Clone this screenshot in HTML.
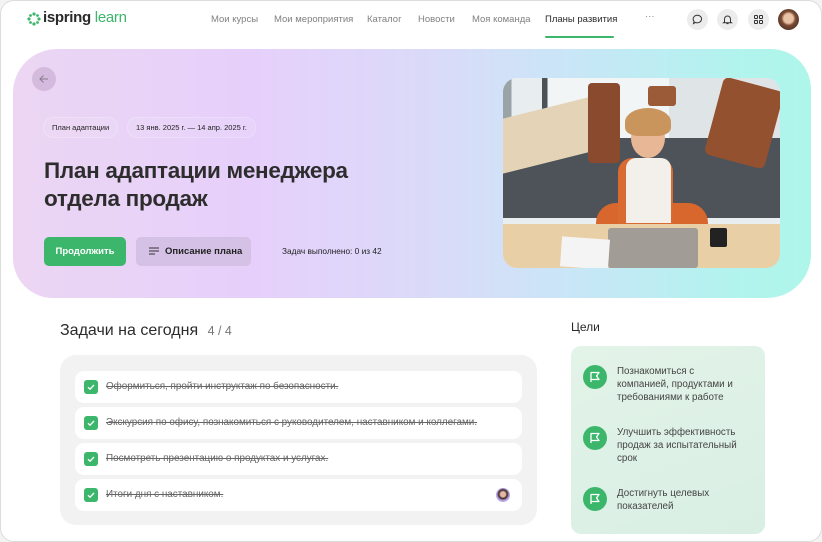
<!DOCTYPE html>
<html><head><meta charset="utf-8"><style>
*{margin:0;padding:0;box-sizing:border-box}
body{width:822px;height:542px;background:#f3f3f3;font-family:"Liberation Sans",Arial,sans-serif;position:relative;overflow:hidden;color:#2b2b2b}
.frame{position:absolute;left:0;top:0;width:822px;height:542px;background:#fff;border:1px solid #dcdcdc;border-radius:14px;overflow:hidden}
.a{position:absolute}
.nav{font-size:9.5px;color:#808080;top:13px}
.ic{width:21px;height:21px;border-radius:50%;background:#ececec;top:8px}
.hero{left:12px;top:48px;width:798px;height:249px;border-radius:44px 40px 44px 40px;background:linear-gradient(90deg,#ecd6f3 0%,#e6d0fb 30%,#d8dcf8 55%,#c9e6f7 70%,#b2f3ee 90%,#aef6ea 100%)}
.chip{font-size:7.5px;color:#222;background:rgba(255,255,255,.08);border:1px solid rgba(255,255,255,.2);border-radius:10px;padding:5px 8px;top:116px}
.task{left:74px;width:447px;height:32px;background:#fff;border-radius:9px}
.chk{position:absolute;left:9px;top:9px;width:14px;height:14px;border-radius:3px;background:#3cb66b}
.chk svg{position:absolute;left:2px;top:2px}
.tt{position:absolute;left:31px;top:10px;font-size:9.9px;color:#666;text-decoration:line-through}
.goal{left:582px;width:180px}
.gi{position:absolute;left:0;top:0;width:24px;height:24px;border-radius:50%;background:#3cb66b}
.gi svg{position:absolute;left:6px;top:6px}
.gt{position:absolute;left:34px;top:0;font-size:9.8px;line-height:13px;color:#444;white-space:nowrap}
</style></head><body>
<div class="frame">
<svg class="a" style="left:26px;top:11px" width="14" height="14" viewBox="0 0 14 14"><g fill="#3cb66b"><circle cx="7" cy="2" r="1.6"/><circle cx="7" cy="12" r="1.6"/><circle cx="2" cy="7" r="1.6"/><circle cx="12" cy="7" r="1.6"/><circle cx="3.5" cy="3.5" r="1.4"/><circle cx="10.5" cy="3.5" r="1.4"/><circle cx="3.5" cy="10.5" r="1.4"/><circle cx="10.5" cy="10.5" r="1.4"/></g></svg>
<div class="a" style="left:42px;top:8px;font-size:15px;letter-spacing:-.3px"><span style="color:#2a2a2a;font-weight:bold">ispring</span> <span style="color:#3cb66b">learn</span></div>
<div class="a nav" style="left:210px">Мои курсы</div>
<div class="a nav" style="left:273px">Мои мероприятия</div>
<div class="a nav" style="left:366px">Каталог</div>
<div class="a nav" style="left:417px">Новости</div>
<div class="a nav" style="left:471px">Моя команда</div>
<div class="a nav" style="left:544px;color:#2a2a2a">Планы развития</div>
<div class="a" style="left:544px;top:35px;width:69px;height:2px;background:#3cb66b;border-radius:1px"></div>
<div class="a nav" style="left:644px;top:10px;color:#888">···</div>
<div class="a ic" style="left:686px"><svg style="position:absolute;left:5px;top:5px" width="11" height="11" viewBox="0 0 11 11"><path d="M5.5 1.2a4.2 3.8 0 1 1-2 7.2L1.5 9.6l.6-2.2A4.2 3.8 0 0 1 5.5 1.2z" fill="none" stroke="#333" stroke-width="1"/></svg></div>
<div class="a ic" style="left:716px"><svg style="position:absolute;left:5px;top:5px" width="11" height="11" viewBox="0 0 11 11"><path d="M2.5 8V5a3 3 0 0 1 6 0v3l1 .8h-8zM4.5 9.6h2" fill="none" stroke="#333" stroke-width="1"/></svg></div>
<div class="a ic" style="left:747px"><svg style="position:absolute;left:6px;top:6px" width="9" height="9" viewBox="0 0 9 9"><g fill="none" stroke="#333" stroke-width="1"><rect x=".5" y=".5" width="3" height="3" rx=".6"/><rect x="5.5" y=".5" width="3" height="3" rx=".6"/><rect x=".5" y="5.5" width="3" height="3" rx=".6"/><rect x="5.5" y="5.5" width="3" height="3" rx=".6"/></g></svg></div>
<div class="a" style="left:777px;top:8px;width:21px;height:21px;border-radius:50%;background:radial-gradient(circle at 50% 45%,#e9c2a6 0 30%,#7a4a33 45%,#5a3a2a 70%,#9a8a80 100%)"></div>

<div class="a hero"></div>
<div class="a" style="left:31px;top:66px;width:24px;height:24px;border-radius:50%;background:rgba(160,130,170,.3)"><svg style="position:absolute;left:6px;top:6px" width="12" height="12" viewBox="0 0 12 12"><path d="M10 6H2M5.5 2.5L2 6l3.5 3.5" fill="none" stroke="#8a7a90" stroke-width="1"/></svg></div>
<div class="a chip" style="left:42px">План адаптации</div>
<div class="a chip" style="left:126px">13 янв. 2025 г. — 14 апр. 2025 г.</div>
<div class="a" style="left:43px;top:156px;font-size:22.5px;line-height:28px;color:#2d2d2d;font-weight:bold;letter-spacing:-.3px;white-space:nowrap">План адаптации менеджера<br>отдела продаж</div>
<div class="a" style="left:43px;top:236px;width:82px;height:29px;border-radius:5px;background:#3cb66b;color:#fff;font-size:9.5px;font-weight:bold;text-align:center;line-height:29px">Продолжить</div>
<div class="a" style="left:135px;top:236px;width:115px;height:29px;border-radius:5px;background:#d5c1e6;color:#222;font-size:9.5px;font-weight:bold;line-height:29px;padding-left:29px">Описание плана</div>
<svg class="a" style="left:148px;top:246px" width="10" height="8" viewBox="0 0 10 8"><path d="M0 1h10M0 4h10M0 7h6" stroke="#333" stroke-width="1"/></svg>
<div class="a" style="left:281px;top:245px;font-size:8.3px;color:#222">Задач выполнено: 0 из 42</div>

<div class="a" style="left:502px;top:77px;width:277px;height:190px;border-radius:14px;overflow:hidden;background:#e9eef0">
 <div class="a" style="left:0;top:0;width:277px;height:60px;background:linear-gradient(90deg,#9aa3a6 0 3%,#e8eef0 3% 14%,#4b5356 14% 16%,#f2f5f5 16% 60%,#dfe5e6 60%)"></div>
 <div class="a" style="left:0;top:60px;width:277px;height:80px;background:#4d5358"></div>
 <div class="a" style="left:0;top:30px;width:85px;height:55px;background:#e4d3b6;transform:skewY(-14deg)"></div>
 <div class="a" style="left:85px;top:5px;width:32px;height:80px;background:#8a4a2e;border-radius:4px"></div>
 <div class="a" style="left:210px;top:5px;width:62px;height:80px;background:#94512f;border-radius:6px;transform:rotate(15deg)"></div>
 <div class="a" style="left:145px;top:8px;width:28px;height:20px;background:#9b5a38;border-radius:3px"></div>
 <div class="a" style="left:93px;top:125px;width:112px;height:30px;background:#d7672c;border-radius:20px 20px 6px 6px"></div>
 <div class="a" style="left:115px;top:80px;width:55px;height:70px;background:#d96a30;border-radius:14px 14px 0 0"></div>
 <div class="a" style="left:123px;top:80px;width:45px;height:65px;background:#f3efea;border-radius:10px 10px 0 0"></div>
 <div class="a" style="left:128px;top:40px;width:34px;height:40px;background:#e7b796;border-radius:50%"></div>
 <div class="a" style="left:122px;top:30px;width:46px;height:28px;background:#c9955c;border-radius:50% 50% 30% 30%"></div>
 <div class="a" style="left:0;top:146px;width:277px;height:44px;background:#e9cfa6"></div>
 <div class="a" style="left:105px;top:150px;width:90px;height:40px;background:#a19c95;border-radius:3px"></div>
 <div class="a" style="left:58px;top:160px;width:48px;height:30px;background:#f4f4f4;transform:rotate(4deg)"></div>
 <div class="a" style="left:207px;top:150px;width:17px;height:19px;background:#222;border-radius:2px"></div>
</div>

<div class="a" style="left:59px;top:321px;font-size:16px;color:#2b2b2b">Задачи на сегодня <span style="font-size:12.5px;color:#777;margin-left:5px">4 / 4</span></div>
<div class="a" style="left:59px;top:354px;width:477px;height:170px;border-radius:16px;background:#f2f2f2"></div>
<div class="a task" style="top:370px"><div class="chk"><svg width="10" height="10" viewBox="0 0 10 10"><path d="M2 5.2l2 2 4-4.2" fill="none" stroke="#fff" stroke-width="1.3"/></svg></div><div class="tt">Оформиться, пройти инструктаж по безопасности.</div></div>
<div class="a task" style="top:406px"><div class="chk"><svg width="10" height="10" viewBox="0 0 10 10"><path d="M2 5.2l2 2 4-4.2" fill="none" stroke="#fff" stroke-width="1.3"/></svg></div><div class="tt">Экскурсия по офису, познакомиться с руководителем, наставником и коллегами.</div></div>
<div class="a task" style="top:442px"><div class="chk"><svg width="10" height="10" viewBox="0 0 10 10"><path d="M2 5.2l2 2 4-4.2" fill="none" stroke="#fff" stroke-width="1.3"/></svg></div><div class="tt">Посмотреть презентацию о продуктах и услугах.</div></div>
<div class="a task" style="top:478px"><div class="chk"><svg width="10" height="10" viewBox="0 0 10 10"><path d="M2 5.2l2 2 4-4.2" fill="none" stroke="#fff" stroke-width="1.3"/></svg></div><div class="tt">Итоги дня с наставником.</div><div style="position:absolute;left:421px;top:9px;width:14px;height:14px;border-radius:50%;background:radial-gradient(circle at 50% 45%,#e4b8a0 0 25%,#3a2420 40%,#b9a7e8 60%)"></div></div>

<div class="a" style="left:570px;top:319px;font-size:12px;color:#2b2b2b">Цели</div>
<div class="a" style="left:570px;top:345px;width:194px;height:188px;border-radius:10px;background:linear-gradient(160deg,#e3f3e8,#d9efe4)"></div>
<div class="a goal" style="top:364px"><div class="gi"><svg width="12" height="12" viewBox="0 0 12 12"><path d="M2 11V1.5h8l-2.5 3.5L10 8.5H2" fill="none" stroke="#fff" stroke-width="1.3" stroke-linejoin="round"/></svg></div><div class="gt">Познакомиться с<br>компанией, продуктами и<br>требованиями к работе</div></div>
<div class="a goal" style="top:425px"><div class="gi"><svg width="12" height="12" viewBox="0 0 12 12"><path d="M2 11V1.5h8l-2.5 3.5L10 8.5H2" fill="none" stroke="#fff" stroke-width="1.3" stroke-linejoin="round"/></svg></div><div class="gt">Улучшить эффективность<br>продаж за испытательный<br>срок</div></div>
<div class="a goal" style="top:486px"><div class="gi"><svg width="12" height="12" viewBox="0 0 12 12"><path d="M2 11V1.5h8l-2.5 3.5L10 8.5H2" fill="none" stroke="#fff" stroke-width="1.3" stroke-linejoin="round"/></svg></div><div class="gt">Достигнуть целевых<br>показателей</div></div>
</div>
</body></html>
